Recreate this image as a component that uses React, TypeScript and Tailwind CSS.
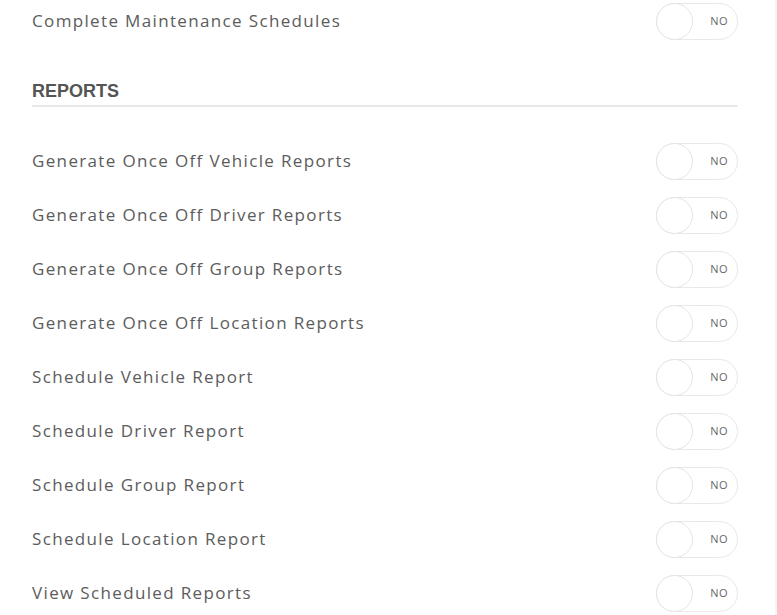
import React from 'react';

const REPORTS = [
  'Generate Once Off Vehicle Reports',
  'Generate Once Off Driver Reports',
  'Generate Once Off Group Reports',
  'Generate Once Off Location Reports',
  'Schedule Vehicle Report',
  'Schedule Driver Report',
  'Schedule Group Report',
  'Schedule Location Report',
  'View Scheduled Reports',
];

function Toggle() {
  return (
    <div className="relative w-[82px] h-[37px] rounded-full border border-[#e8e8e8] bg-white flex items-center justify-end pr-[9px] shrink-0">
      <div className="absolute left-[-1px] top-[-1px] w-[37px] h-[37px] rounded-full border border-[#e4e4e4] bg-white" />
      <span className="text-[11px] text-[#666] tracking-[0.5px]">NO</span>
    </div>
  );
}

function Row({ label }: { label: string }) {
  return (
    <div className="h-[54px] flex items-center justify-between">
      <span className="text-[17px] text-[#5c5c5c] tracking-[1.35px]">{label}</span>
      <Toggle />
    </div>
  );
}

export default function App() {
  return (
    <div className="w-[777px] h-[615px] overflow-hidden bg-white" style={{ fontFamily: '"Open Sans", sans-serif' }}>
      <div className="h-full border-r-2 border-[#f4f4f4] w-[777px] pl-8 pr-[37px] flex flex-col">
        <div className="mt-[-6px]">
          <Row label="Complete Maintenance Schedules" />
        </div>
        <div className="mt-[31px] pb-[2px] border-b-2 border-[#e8e8e8]">
          <h2 className="text-[18px] leading-[24px] font-bold text-[#555]" style={{ fontFamily: '"Liberation Sans", sans-serif' }}>REPORTS</h2>
        </div>
        <div className="mt-[27px] flex flex-col">
          {REPORTS.map(r => <Row key={r} label={r} />)}
        </div>
      </div>
    </div>
  );
}
